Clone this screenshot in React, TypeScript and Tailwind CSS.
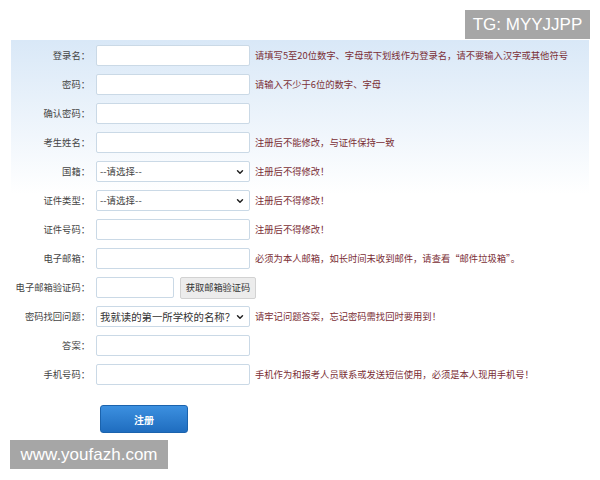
import { ChevronDown } from "lucide-react"

const cjk = { fontFamily: '"Noto Sans CJK SC", "Noto Sans", sans-serif' }

type Row = {
    label: string
    kind: "input" | "select" | "short"
    value?: string
    big?: boolean
    hint?: string
}

const rows: Row[] = [
    { label: "登录名：", kind: "input", hint: "请填写5至20位数字、字母或下划线作为登录名，请不要输入汉字或其他符号" },
    { label: "密码：", kind: "input", hint: "请输入不少于6位的数字、字母" },
    { label: "确认密码：", kind: "input" },
    { label: "考生姓名：", kind: "input", hint: "注册后不能修改，与证件保持一致" },
    { label: "国籍：", kind: "select", value: "--请选择--", hint: "注册后不得修改！" },
    { label: "证件类型：", kind: "select", value: "--请选择--", hint: "注册后不得修改！" },
    { label: "证件号码：", kind: "input", hint: "注册后不得修改！" },
    { label: "电子邮箱：", kind: "input", hint: "必须为本人邮箱，如长时间未收到邮件，请查看“邮件垃圾箱”。" },
    { label: "电子邮箱验证码：", kind: "short" },
    { label: "密码找回问题：", kind: "select", value: "我就读的第一所学校的名称？", big: true, hint: "请牢记问题答案，忘记密码需找回时要用到！" },
    { label: "答案：", kind: "input" },
    { label: "手机号码：", kind: "input", hint: "手机作为和报考人员联系或发送短信使用，必须是本人现用手机号！" },
]

const Control = ({ row }: { row: Row }) => {
    if (row.kind === "short") {
        return (
            <div className="flex items-center gap-[6px]">
                <div className="w-[78px] h-[21px] bg-white border border-[#cad9e6] rounded-[2px]" />
                <div className="w-[76px] h-[22px] bg-[#ececec] border border-[#d2d2d2] rounded-[2px] flex items-center justify-center text-[9.2px] text-[#333] whitespace-nowrap">
                    获取邮箱验证码
                </div>
            </div>
        )
    }
    if (row.kind === "select") {
        return (
            <div className="w-[154px] h-[21px] bg-white border border-[#cad9e6] rounded-[2px] flex items-center justify-between pl-[3px] pr-[4px] overflow-hidden">
                <span className={row.big ? "text-[10.4px] text-[#333] whitespace-nowrap" : "text-[9.5px] text-[#444] whitespace-nowrap"}>{row.value}</span>
                <ChevronDown size={10} strokeWidth={3.5} className="text-[#222] shrink-0" />
            </div>
        )
    }
    return <div className="w-[154px] h-[21px] bg-white border border-[#cad9e6] rounded-[2px]" />
}

export default function App() {
    return (
        <div className="relative w-[600px] h-[480px] bg-white overflow-hidden" style={cjk}>
            {/* form panel */}
            <div className="mt-[40px] ml-[11px] w-[578px] h-[440px] pt-[1px] bg-linear-to-b from-[#d9e8f7] via-white via-[35%] to-white">
                {rows.map((row) => (
                    <div key={row.label} className="flex items-center h-[29px]">
                        <div className="w-[79px] text-right text-[9.3px] text-[#444] whitespace-nowrap">{row.label}</div>
                        <div className="ml-[6px]">
                            <Control row={row} />
                        </div>
                        {row.hint && (
                            <div className="ml-[5px] text-[9.3px] text-[#7a2e35] whitespace-nowrap">{row.hint}</div>
                        )}
                    </div>
                ))}
                <button className="mt-[16px] ml-[89px] w-[88px] h-[28px] rounded-[3px] bg-linear-to-b from-[#3c90e0] to-[#1f6dbf] border border-[#1b63ad] text-white text-[10px] font-bold">
                    注册
                </button>
            </div>

            {/* watermarks */}
            <div className="absolute left-[465px] top-[10px] w-[125px] h-[29px] bg-[#a6a6a6] flex items-center justify-center text-white text-[17px]" style={{ fontFamily: '"Liberation Sans", Arial, sans-serif' }}>
                TG: MYYJJPP
            </div>
            <div className="absolute left-[10px] top-[440px] w-[158px] h-[29px] bg-[#a6a6a6] flex items-center justify-center text-white text-[17px]" style={{ fontFamily: '"Liberation Sans", Arial, sans-serif' }}>
                www.youfazh.com
            </div>
        </div>
    )
}
